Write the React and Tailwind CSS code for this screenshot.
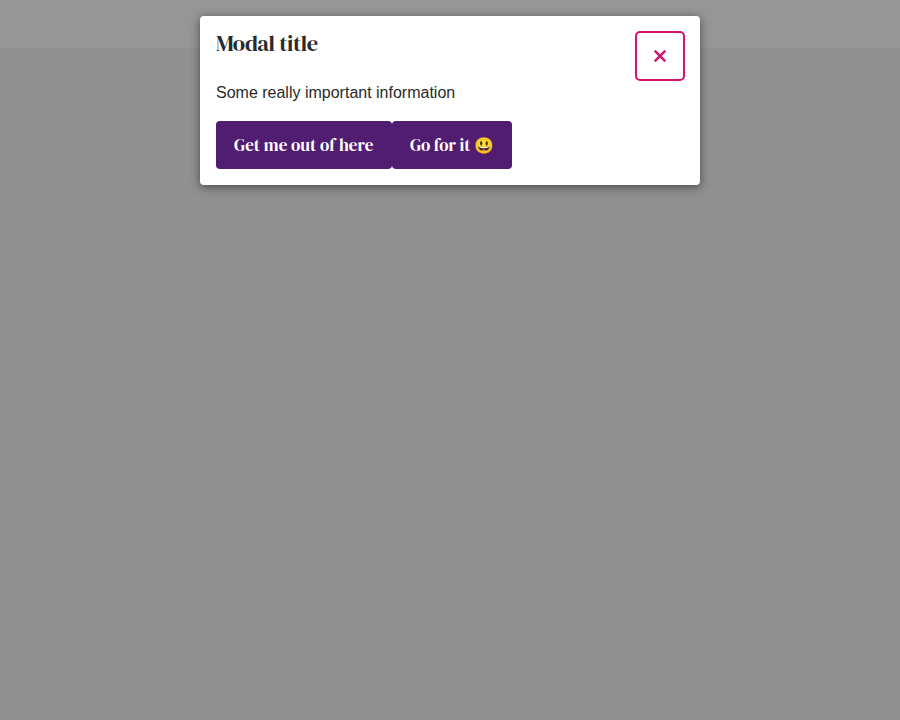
import React from "react";

const serif = "font-['DM_Serif_Display','Liberation_Serif',serif] font-normal";

function ActionButton({ children, className }) {
  return (
    <button
      className={`flex h-12 items-center whitespace-nowrap rounded bg-[#501d70] px-[18px] text-left text-[17px] leading-6 text-white ${serif} ${className}`}
    >
      {children}
    </button>
  );
}

export default function App() {
  return (
    <div className="h-[720px] w-[900px] overflow-hidden bg-[linear-gradient(#969696_48px,#909090_48px)] pt-4">
      <section
        role="dialog"
        className="mx-auto flex h-[169px] w-[500px] flex-col rounded bg-white p-4 text-[#2a2a2a] shadow-[0_2px_10px_rgba(0,0,0,0.5)]"
      >
        <header className="-mt-px flex h-[50px] items-start justify-between">
          <h1 className={`-mt-px text-[22.5px] leading-[28px] tracking-[-0.35px] ${serif}`}>
            Modal title
          </h1>
          <button
            aria-label="Close"
            className="-mr-px flex size-[50px] items-center justify-center rounded-[5px] border-2 border-[#d5136f] text-[#d5136f]"
          >
            <svg width="14" height="14" viewBox="0 0 14 14" fill="none" stroke="currentColor" strokeWidth="2.5" strokeLinecap="round">
              <path d="M2.4 2.4 11.6 11.6M11.6 2.4 2.4 11.6" />
            </svg>
          </button>
        </header>
        <p className="font-['Liberation_Sans',Arial,sans-serif] text-base leading-6">
          Some really important information
        </p>
        <div className="mt-4 flex">
          <ActionButton className="w-44 tracking-[0.05px]">Get me out of here</ActionButton>
          <ActionButton className="w-[120px]">
            <span className="w-16 tracking-[-0.1px]">Go for it</span>
            <span className="text-[16px]">😃</span>
          </ActionButton>
        </div>
      </section>
    </div>
  );
}
